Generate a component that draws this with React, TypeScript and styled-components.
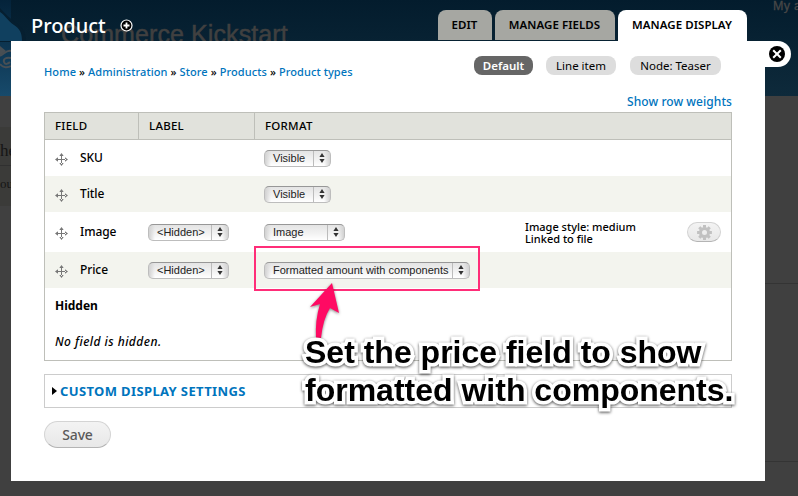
import React from "react";
import styled, { createGlobalStyle, css } from "styled-components";

const ui = `"Noto Sans", "Open Sans", sans-serif`;
const helv = `"Liberation Sans", Arial, sans-serif`;

const Global = createGlobalStyle`
  * { box-sizing: border-box; }
  body { margin: 0; background: #404040; }
`;

const Page = styled.div`
  position: relative;
  width: 798px;
  height: 496px;
  overflow: hidden;
  background: #404040;
  font-family: ${ui};
  color: #000;
`;

/* Dimmed site that lies under the overlay */
const Backdrop = styled.div`
  position: absolute;
  inset: 0;
`;
const SiteHeader = styled.div`
  height: 96px;
  background: linear-gradient(#031c2d, #0e2a3b);
`;
const SiteDrop = styled.svg`
  position: absolute;
  left: 0;
  top: 0;
`;
const SiteName = styled.div`
  position: absolute;
  left: 61px;
  top: 19px;
  font: 25px/30px ${helv};
  letter-spacing: 0.1px;
  color: #404040;
  -webkit-text-stroke: 0.5px #404040;
  white-space: nowrap;
`;
const SiteLink = styled.div`
  position: absolute;
  left: 773px;
  top: -3px;
  font: 12.5px/18px ${helv};
  letter-spacing: 0.3px;
  color: #474747;
  -webkit-text-stroke: 0.3px #474747;
  white-space: nowrap;
`;
const SiteText = styled.div<{ $top: number; $size: number }>`
  position: absolute;
  left: 0;
  top: ${(p) => p.$top}px;
  font: ${(p) => p.$size}px/20px "Liberation Serif", serif;
  color: #151515;
`;
const SiteBand = styled.div`
  position: absolute;
  left: 0;
  top: 127px;
  width: 11px;
  height: 79px;
  background: linear-gradient(#3b3b39 0 38px, #303030 38px 39px, #3b3b39 39px);
`;
const SiteRule = styled.div<{ $top: number }>`
  position: absolute;
  left: 765px;
  right: 0;
  top: ${(p) => p.$top}px;
  height: 1px;
  background: #343434;
`;

const Overlay = styled.div`
  position: relative;
  width: 754px;
  margin-left: 11px;
`;
const TitleBar = styled.header`
  height: 41px;
  padding: 10px 18px 0 20px;
  display: flex;
  justify-content: space-between;
  align-items: flex-start;
`;
const Title = styled.h1`
  margin: 0;
  display: flex;
  align-items: center;
  gap: 14px;
  font: 500 20px/31px ${ui};
  letter-spacing: -0.05px;
  color: #fff;
`;
const Tabs = styled.nav`
  display: flex;
  gap: 3px;
`;
const Tab = styled.a<{ $w: number; $active?: boolean }>`
  width: ${(p) => p.$w}px;
  height: ${(p) => (p.$active ? 31 : 30)}px;
  padding-right: 1px;
  border-radius: 8px 8px 0 0;
  background: ${(p) => (p.$active ? "#fff" : "#a6a7a2")};
  font: 600 11.5px/30px ${ui};
  letter-spacing: 0.05px;
  text-align: center;
  white-space: nowrap;
`;
const CloseTab = styled.button`
  position: absolute;
  left: 754px;
  top: 41px;
  width: 26px;
  height: 26px;
  padding: 0 0 0 5px;
  display: flex;
  align-items: center;
  justify-content: flex-start;
  border: 0;
  border-radius: 0 13px 13px 0;
  background: #fff;
  svg { position: relative; left: -1px; flex: none; }
`;
const Panel = styled.main`
  height: 440px;
  padding: 15px 33px 0;
  background: #fff;
`;
const TopRow = styled.div`
  display: flex;
  justify-content: space-between;
  height: 38px;
`;
const Crumbs = styled.div`
  padding-top: 8px;
  font: 500 11px/16px ${ui};
  letter-spacing: 0.09px;
  white-space: nowrap;
  a { color: #0074bd; }
`;
const Pills = styled.div`
  display: flex;
  gap: 13px;
  padding-right: 11px;
`;
const Pill = styled.a<{ $w: number; $active?: boolean }>`
  width: ${(p) => p.$w}px;
  height: 19px;
  border-radius: 8px;
  text-align: center;
  white-space: nowrap;
  font: ${(p) => (p.$active ? 600 : 400)} 11.5px/19px ${ui};
  background: ${(p) => (p.$active ? "#666" : "#ddd")};
  color: ${(p) => (p.$active ? "#fff" : "#000")};
  &:last-child { margin-left: 1px; }
`;
const Weights = styled.a`
  display: block;
  height: 18px;
  text-align: right;
  font: 500 12px/16px ${ui};
  letter-spacing: 0.06px;
  color: #0074bd;
`;
const Table = styled.section`
  width: 688px;
  height: 249px;
  border: 1px solid #bebfb9;
`;
const cols = css`
  display: grid;
  grid-template-columns: 94px 116px 260px 1fr;
`;
const HeadRow = styled.div`
  ${cols}
  height: 27px;
  background: #e1e2dc;
  border-bottom: 1px solid #bebfb9;
  font: 500 11.5px/26px ${ui};
  letter-spacing: 0.25px;
`;
const HeadCell = styled.div<{ $line?: boolean }>`
  padding-left: 10px;
  border-right: ${(p) => (p.$line ? "1px solid #bebfb9" : "0")};
`;
const Row = styled.div<{ $h: number; $odd?: boolean }>`
  ${cols}
  height: ${(p) => p.$h}px;
  background: ${(p) => (p.$odd ? "#f3f4ee" : "#fff")};
  align-items: center;
`;
const NameCell = styled.div`
  display: flex;
  align-items: center;
  gap: 12px;
  padding-left: 10px;
  font: 500 12px/18px ${ui};
  letter-spacing: -0.1px;
  svg { margin-top: 3px; }
`;
const Cell = styled.div`
  padding-left: 9px;
`;
const SelectBox = styled.div<{ $w: number }>`
  display: flex;
  width: ${(p) => p.$w}px;
  height: 17px;
  border: 1px solid #bdbdbd;
  border-top-color: #979797;
  border-radius: 5px;
  background: linear-gradient(90deg, #d2d2d2, transparent 6px calc(100% - 6px), #d2d2d2),
    linear-gradient(#e4e4e4, #f3f3f3 60%, #fff);
  font: 11px/15px ${helv};
  color: #222;
`;
const SelectText = styled.span`
  flex: 1;
  padding-left: 8px;
  white-space: nowrap;
`;
const SelectArrows = styled.span`
  width: 17px;
  border-left: 1px solid #bcbcbc;
  display: flex;
  align-items: center;
  justify-content: center;
`;
const Summary = styled.div`
  display: flex;
  align-items: center;
  justify-content: space-between;
  padding: 2px 10px 0;
  font: 500 11px/12px ${ui};
  white-space: nowrap;
`;
const GearButton = styled.button`
  width: 34px;
  height: 20px;
  margin-top: -2px;
  padding: 0;
  display: flex;
  align-items: center;
  justify-content: center;
  border: 1px solid #d2d2d2;
  border-bottom-color: #b4b4b4;
  border-radius: 10px;
  background: linear-gradient(#f3f3f3, #e8e8e8);
`;
const Region = styled.div`
  height: 36px;
  padding-left: 10px;
  font: 700 12px/35px ${ui};
`;
const Empty = styled(Region)`
  font: italic 500 12px/35px ${ui};
  letter-spacing: 0.46px;
`;
const Fieldset = styled.section`
  display: flex;
  align-items: center;
  gap: 3px;
  width: 688px;
  height: 34px;
  margin-top: 13px;
  padding: 0 0 1px 7px;
  border: 1px solid #ccc;
  font: 700 13px/18px ${ui};
  letter-spacing: 0.37px;
  color: #0074bd;
`;
const Save = styled.button`
  display: block;
  width: 67px;
  height: 27px;
  margin-top: 13px;
  padding: 0;
  border: 1px solid #d4d4d4;
  border-bottom-color: #b4b4b4;
  border-radius: 14px;
  background: linear-gradient(#f3f3f3, #e8e8e8);
  font: 500 14px/24px ${ui};
  letter-spacing: -0.15px;
  color: #5a5a5a;
`;

/* Annotation drawn over the page */
const Highlight = styled.div`
  position: absolute;
  left: 254px;
  top: 246px;
  width: 226px;
  height: 45px;
  border: 2px solid #ff2d78;
`;
const Arrow = styled.svg`
  position: absolute;
  left: 300px;
  top: 276px;
  filter: drop-shadow(0 1px 1.5px rgba(0, 0, 0, 0.5));
`;
const Note = styled.div`
  position: absolute;
  left: 305px;
  top: 333px;
  font: 700 32px/38px ${helv};
  white-space: nowrap;
  -webkit-text-stroke: 7px #fff;
  paint-order: stroke fill;
  stroke-linejoin: round;
  filter: drop-shadow(0 1px 1.5px rgba(0, 0, 0, 0.7));
`;

const PlusIcon = () => (
  <svg width="13" height="13" viewBox="0 0 13 13">
    <circle cx="6.5" cy="6.5" r="5.5" fill="#000" stroke="#fff" strokeWidth="1.2" />
    <path d="M6.5 3.5v6M3.5 6.5h6" stroke="#fff" strokeWidth="1.8" />
  </svg>
);
const CloseIcon = () => (
  <svg width="16" height="16" viewBox="0 0 16 16">
    <circle cx="8" cy="8" r="8" fill="#000" />
    <path d="M4.2 4.2l7.6 7.6M11.8 4.2l-7.6 7.6" stroke="#fff" strokeWidth="2" />
  </svg>
);
const MoveIcon = () => (
  <svg width="13" height="13" viewBox="0 0 13 13" fill="#777">
    <path d="M6 2h1v9H6zM2 6h9v1H2zM6.5 0l2.2 3H4.3zM6.5 13l2.2-3H4.3zM0 6.5l3-2.2v4.4zM13 6.5l-3-2.2v4.4z" />
  </svg>
);
const GearIcon = () => (
  <svg width="15" height="15" viewBox="-7.5 -7.5 15 15">
    <circle r="4" fill="none" stroke="#c1c1c1" strokeWidth="3" />
    {[0, 45, 90, 135].map((a) => (
      <path key={a} d="M-1.5 -7.4h3v2.6h-3zM-1.5 4.8h3v2.6h-3z" fill="#c1c1c1" transform={`rotate(${a})`} />
    ))}
  </svg>
);

const Select = ({ text, w }: { text: string; w: number }) => (
  <SelectBox $w={w}>
    <SelectText>{text}</SelectText>
    <SelectArrows>
      <svg width="6" height="10" viewBox="0 0 6 10" fill="#333">
        <path d="M3 0l2.6 4H.4zM3 10l2.6-4H.4z" />
      </svg>
    </SelectArrows>
  </SelectBox>
);

const Name = ({ children }: { children: string }) => (
  <NameCell>
    <MoveIcon />
    <span>{children}</span>
  </NameCell>
);

const crumbs = ["Home", "Administration", "Store", "Products", "Product types"];

export default function App() {
  return (
    <Page>
      <Global />
      <Backdrop>
        <SiteHeader />
        <SiteDrop width="30" height="96" viewBox="0 0 30 96">
          <defs>
            <linearGradient id="edge" x1="0" y1="0" x2="0" y2="1">
              <stop offset="0" stopColor="#04233a" />
              <stop offset="1" stopColor="#174a6b" />
            </linearGradient>
          </defs>
          <path d="M0 0h11v96H0z" fill="url(#edge)" />
          <path d="M0 8C5 14 10 18 16 23c8 6 10 11 10 19H0z" fill="#061f30" />
          <path d="M0 12C5 15 8 21 14 25c6 4 8 8 8 16H0z" fill="#10405f" />
          <path d="M0 46l6 5-6 5z" fill="#484f54" />
          <path d="M11 51c-4-1-6 2-11 5M11 58c-5-1-8 1-7 4s4 2 6 0M0 64c3 4 8 4 11 2" fill="none" stroke="#484f54" strokeWidth="2" />
        </SiteDrop>
        <SiteName>Commerce Kickstart</SiteName>
        <SiteLink>My account</SiteLink>
        <SiteBand />
        <SiteText $top={141} $size={17}>he</SiteText>
        <SiteText $top={174} $size={13}>ou</SiteText>
        <SiteRule $top={283} />
        <SiteRule $top={461} />
      </Backdrop>
      <Overlay>
        <TitleBar>
          <Title>
            Product <PlusIcon />
          </Title>
          <Tabs>
            <Tab $w={54}>EDIT</Tab>
            <Tab $w={120}>MANAGE FIELDS</Tab>
            <Tab $w={129} $active>MANAGE DISPLAY</Tab>
          </Tabs>
        </TitleBar>
        <CloseTab aria-label="Close">
          <CloseIcon />
        </CloseTab>
        <Panel>
          <TopRow>
            <Crumbs>
              {crumbs.map((c, i) => (
                <React.Fragment key={c}>
                  {i > 0 && " » "}
                  <a>{c}</a>
                </React.Fragment>
              ))}
            </Crumbs>
            <Pills>
              <Pill $w={59} $active>Default</Pill>
              <Pill $w={70}>Line item</Pill>
              <Pill $w={91}>Node: Teaser</Pill>
            </Pills>
          </TopRow>
          <Weights>Show row weights</Weights>
          <Table>
            <HeadRow>
              <HeadCell $line>FIELD</HeadCell>
              <HeadCell $line>LABEL</HeadCell>
              <HeadCell>FORMAT</HeadCell>
            </HeadRow>
            <Row $h={36}>
              <Name>SKU</Name>
              <Cell />
              <Cell><Select text="Visible" w={67} /></Cell>
            </Row>
            <Row $h={36} $odd>
              <Name>Title</Name>
              <Cell />
              <Cell><Select text="Visible" w={67} /></Cell>
            </Row>
            <Row $h={40}>
              <Name>Image</Name>
              <Cell><Select text="<Hidden>" w={81} /></Cell>
              <Cell><Select text="Image" w={81} /></Cell>
              <Summary>
                <div>Image style: medium<br />Linked to file</div>
                <GearButton aria-label="Settings"><GearIcon /></GearButton>
              </Summary>
            </Row>
            <Row $h={36} $odd>
              <Name>Price</Name>
              <Cell><Select text="<Hidden>" w={81} /></Cell>
              <Cell><Select text="Formatted amount with components" w={206} /></Cell>
            </Row>
            <Region>Hidden</Region>
            <Empty>No field is hidden.</Empty>
          </Table>
          <Fieldset>
            <svg width="5" height="8" viewBox="0 0 5 8"><path d="M0 0l5 4-5 4z" /></svg>
            CUSTOM DISPLAY SETTINGS
          </Fieldset>
          <Save>Save</Save>
        </Panel>
      </Overlay>
      <Highlight />
      <Arrow width="50" height="66" viewBox="0 0 50 66">
        <path d="M32 7L39 37L30 32Q23 43 21 62H16Q15 44 20 28L10 31Z" fill="#ff0a63" />
      </Arrow>
      <Note>
        <div>Set the price field to show</div>
        <div>formatted with components.</div>
      </Note>
    </Page>
  );
}
